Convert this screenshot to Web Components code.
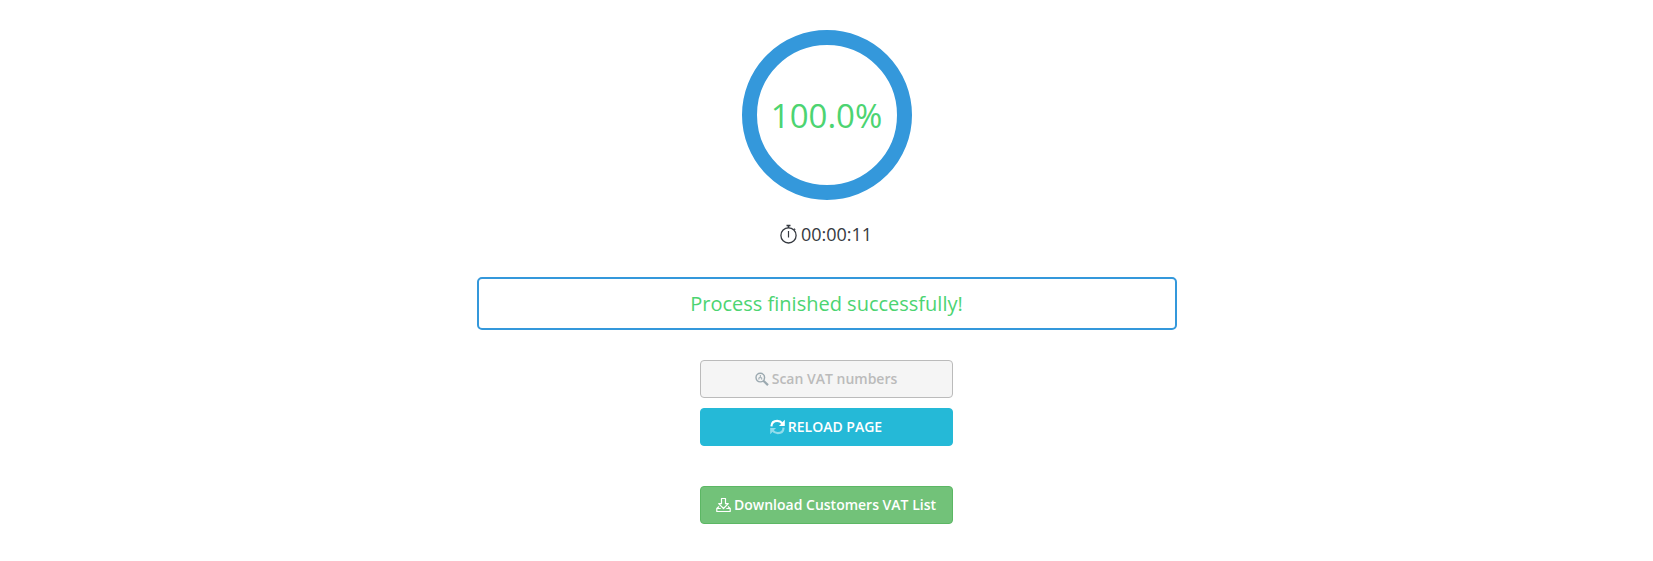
<!DOCTYPE html>
<html lang="en"><head><meta charset="utf-8"><title>VAT scan</title>
<style>body{margin:0;background:#fff;font-family:"Open Sans","Noto Sans",sans-serif}</style></head><body>
<vat-scan-page></vat-scan-page>
<script>
function define(name, html){
  customElements.define(name, class extends HTMLElement{
    constructor(){super();this.attachShadow({mode:'open'}).innerHTML=html;}
  });
}
define('progress-ring',`<style>
:host{display:grid;box-sizing:border-box;width:170px;height:170px;border:15px solid #3498db;border-radius:50%;place-items:center;font-size:33px;line-height:46px;color:#4cd471}
span{display:block;white-space:nowrap;padding:2px 1px 0 0}</style><span><slot></slot></span>`);
define('elapsed-time',`<style>
:host{display:flex;align-items:center;gap:3px;height:26px;font-size:18px;line-height:26px;color:#363a41}
svg{display:block}</style>
<svg width="18" height="20" viewBox="0 0 18 20" fill="none" stroke="#363a41"><circle cx="8.5" cy="11.4" r="7.6" stroke-width="1.3"/><path d="M6.5 1.5h4M8.5 2v2" stroke-width="1.6"/><path d="M8.5 7v6.5M14 4.6l1.2 1.2" stroke-width="1.2"/></svg>
<span><slot></slot></span>`);
define('status-message',`<style>
:host{display:flex;box-sizing:border-box;width:700px;height:53px;border:2px solid #3498db;border-radius:5px;padding-right:1px;align-items:center;justify-content:center;font-size:20px;line-height:28px;color:#4cd471}</style><span><slot></slot></span>`);
define('action-button',`<style>
:host{display:block;width:253px;height:38px}
button{display:flex;box-sizing:border-box;width:100%;height:100%;margin:0;padding:0 1px 1px 0;align-items:center;justify-content:center;gap:3px;border:1px solid #25b9d7;border-radius:4px;background:#25b9d7;color:#fff;font:600 14px/21px "Open Sans","Noto Sans",sans-serif;white-space:nowrap}
:host([kind=scan]) button{background:#f5f5f5;border-color:#bbb;color:#bbb}
:host([kind=download]) button{background:#72c279;border-color:#5cb764}
::slotted(svg){display:block;flex:none}</style>
<button><slot name="icon"></slot><span><slot></slot></span></button>`);
define('vat-scan-page',`<style>
:host{display:flex;flex-direction:column;align-items:center;box-sizing:border-box;width:100%;height:561px;padding:30px 0 0 1px}
elapsed-time{margin-top:21px;margin-right:2px}status-message{margin-top:30px}
action-button{margin-right:1px}
.scan{margin-top:30px}.reload{margin-top:10px}.download{margin-top:40px}</style>
<progress-ring>100.0%</progress-ring>
<elapsed-time>00:00:11</elapsed-time>
<status-message>Process finished successfully!</status-message>
<action-button class="scan" kind="scan"><svg slot="icon" width="14" height="14" viewBox="0 0 14 14" fill="none" stroke="#9ba9b0"><circle cx="5.3" cy="5.6" r="4.3" stroke-width="1.4"/><path d="M8.4 8.7l4.6 4.4" stroke-width="2.2"/><path d="M5.3 3v2.2M3.9 7.6V5.7h2.8v1.9" stroke-width="1"/></svg>Scan VAT numbers</action-button>
<action-button class="reload"><svg slot="icon" width="15" height="16" viewBox="0 0 15 16" fill="none" stroke="#fff" stroke-width="2.1"><path d="M1.4 7.4C1.6 3.6 4.2 1.9 7.2 1.9c2.2 0 3.8.9 5.2 2.6"/><path d="M14.8.7v6.2H8.9l1.9-1.6 2-2.6z" fill="#fff" stroke="none"/><g opacity=".5"><path d="M13.6 8.6c-.2 3.8-2.8 5.5-5.8 5.5-2.2 0-3.8-.9-5.2-2.6"/><path d="M.2 15.3V9.1h5.9l-1.9 1.6-2 2.6z" fill="#fff" stroke="none"/></g></svg>RELOAD PAGE</action-button>
<action-button class="download" kind="download"><svg slot="icon" width="15" height="16" viewBox="0 0 15 16" fill="none" stroke="#fff" stroke-width="1.2" stroke-linejoin="round"><path d="M5.5 1.5h4v5.2h2.8L7.5 11.5 2.7 6.7h2.8z"/><path d="M3 9.5.8 11.5v3h13.4v-3L12 9.5M.8 11.5h3.9M10.3 11.5h3.9" /></svg>Download Customers VAT List</action-button>`);
</script></body></html>
